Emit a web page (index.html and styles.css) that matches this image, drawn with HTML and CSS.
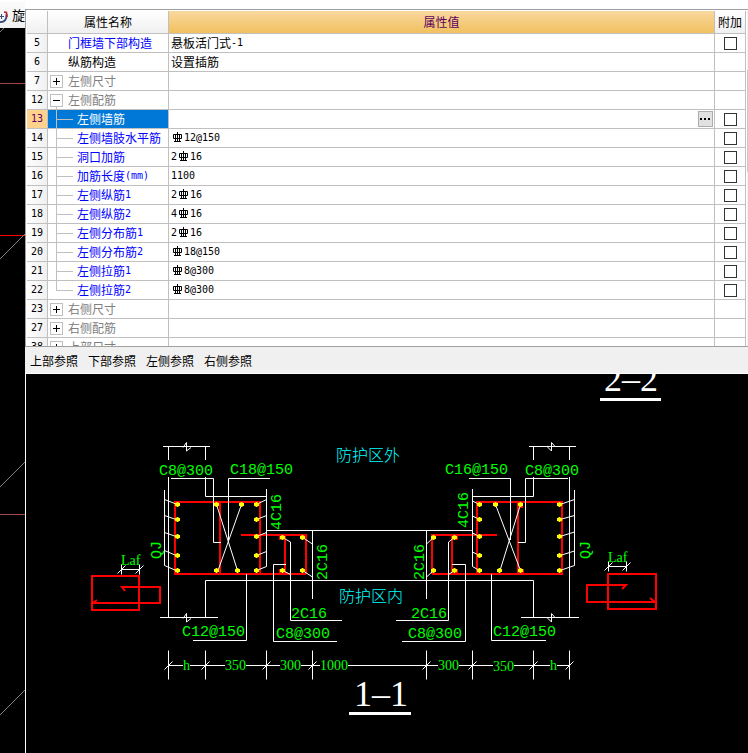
FILE: index.html
```html
<!DOCTYPE html>
<html lang="zh-CN">
<head>
<meta charset="utf-8">
<title>属性编辑</title>
<link rel="stylesheet" href="styles.css">
</head>
<body>
<svg class="defs" aria-hidden="true">
  <symbol id="rebar" viewBox="0 0 13 10">
    <path d="M2.500 2.500H10.500V6.500H2.500ZM6.500 0V9.500M4.500 2V9M8.500 2V9M3 9.500H10" fill="none" stroke="#000"/>
  </symbol>
</svg>
<div class="app">
  <aside class="viewport">
    <div class="toolbar">
      <svg class="rotate" viewBox="0 0 11 24" aria-hidden="true">
        <path d="M0 13.500H4M1.500 11V16" stroke="#3c4a78" fill="none"/>
        <path d="M0 19C4.500 19.500 7 16 6.500 11" stroke="#3c4a78" stroke-width="2" fill="none"/>
        <path d="M4 9L6.500 9.500L7 14" stroke="#b02030" stroke-width="1.500" fill="none"/>
      </svg>
      <span class="toolbar-label">旋转</span>
    </div>
    <svg class="scene" viewBox="0 28 25 725" preserveAspectRatio="xMinYMin slice" aria-hidden="true">
      <path class="axis dim" d="M0 83.500H25M0 514.500H25"/>
      <path class="axis" d="M0 235.500H25"/>
      <path class="ray" d="M0 32L4 28M0 259L25 234M0 487L25 462M0 715L25 690"/>
    </svg>
  </aside>

  <main class="panel">
    <div class="pane">
      <table class="props">
        <colgroup><col class="c-num"><col class="c-name"><col><col class="c-extra"></colgroup>
        <thead>
          <tr><th></th><th>属性名称</th><th class="active">属性值</th><th>附加</th></tr>
        </thead>
        <tbody>
          <tr><th>5</th><td class="name link">门框墙下部构造</td><td><div class="tree">悬板活门式<span class="n">-1</span></div></td><td class="extra"><input type="checkbox" aria-label="附加 门框墙下部构造"></td></tr>
          <tr><th>6</th><td class="name">纵筋构造</td><td>设置插筋</td><td></td></tr>
          <tr><th>7</th><td class="group"><div class="tree"><button class="toggle plus" aria-label="展开"></button>左侧尺寸</div></td><td></td><td></td></tr>
          <tr><th>12</th><td class="group"><div class="tree"><button class="toggle open" aria-label="折叠"></button>左侧配筋</div></td><td></td><td></td></tr>
          <tr class="selected"><th>13</th><td class="leaf"><div class="tree"><i class="guide"></i>左侧墙筋</div></td><td><div class="editor"><button class="more" aria-label="更多"></button></div></td><td class="extra"><input type="checkbox" aria-label="附加 左侧墙筋"></td></tr>
          <tr><th>14</th><td class="leaf"><div class="tree"><i class="guide"></i>左侧墙肢水平筋</div></td><td class="n"><svg class="bar"><use href="#rebar"/></svg>12@150</td><td class="extra"><input type="checkbox" aria-label="附加 左侧墙肢水平筋"></td></tr>
          <tr><th>15</th><td class="leaf"><div class="tree"><i class="guide"></i>洞口加筋</div></td><td class="n">2<svg class="bar"><use href="#rebar"/></svg>16</td><td class="extra"><input type="checkbox" aria-label="附加 洞口加筋"></td></tr>
          <tr><th>16</th><td class="leaf"><div class="tree"><i class="guide"></i>加筋长度<span class="n">(mm)</span></div></td><td class="n">1100</td><td class="extra"><input type="checkbox" aria-label="附加 加筋长度"></td></tr>
          <tr><th>17</th><td class="leaf"><div class="tree"><i class="guide"></i>左侧纵筋<span class="n">1</span></div></td><td class="n">2<svg class="bar"><use href="#rebar"/></svg>16</td><td class="extra"><input type="checkbox" aria-label="附加 左侧纵筋1"></td></tr>
          <tr><th>18</th><td class="leaf"><div class="tree"><i class="guide"></i>左侧纵筋<span class="n">2</span></div></td><td class="n">4<svg class="bar"><use href="#rebar"/></svg>16</td><td class="extra"><input type="checkbox" aria-label="附加 左侧纵筋2"></td></tr>
          <tr><th>19</th><td class="leaf"><div class="tree"><i class="guide"></i>左侧分布筋<span class="n">1</span></div></td><td class="n">2<svg class="bar"><use href="#rebar"/></svg>16</td><td class="extra"><input type="checkbox" aria-label="附加 左侧分布筋1"></td></tr>
          <tr><th>20</th><td class="leaf"><div class="tree"><i class="guide"></i>左侧分布筋<span class="n">2</span></div></td><td class="n"><svg class="bar"><use href="#rebar"/></svg>18@150</td><td class="extra"><input type="checkbox" aria-label="附加 左侧分布筋2"></td></tr>
          <tr><th>21</th><td class="leaf"><div class="tree"><i class="guide"></i>左侧拉筋<span class="n">1</span></div></td><td class="n"><svg class="bar"><use href="#rebar"/></svg>8@300</td><td class="extra"><input type="checkbox" aria-label="附加 左侧拉筋1"></td></tr>
          <tr><th>22</th><td class="leaf"><div class="tree"><i class="guide last"></i>左侧拉筋<span class="n">2</span></div></td><td class="n"><svg class="bar"><use href="#rebar"/></svg>8@300</td><td class="extra"><input type="checkbox" aria-label="附加 左侧拉筋2"></td></tr>
          <tr><th>23</th><td class="group"><div class="tree"><button class="toggle plus" aria-label="展开"></button>右侧尺寸</div></td><td></td><td></td></tr>
          <tr><th>27</th><td class="group"><div class="tree"><button class="toggle plus" aria-label="展开"></button>右侧配筋</div></td><td></td><td></td></tr>
          <tr><th>38</th><td class="group"><div class="tree"><button class="toggle plus" aria-label="展开"></button>上部尺寸</div></td><td></td><td></td></tr>
        </tbody>
      </table>
      <div class="scrollbar"><div class="thumb"></div></div>
    </div>

    <nav class="refs">
      <button>上部参照</button><button>下部参照</button><button>左侧参照</button><button>右侧参照</button>
    </nav>

    <svg class="drawing" viewBox="26 374 722 379" preserveAspectRatio="xMinYMin meet">
      <defs>
        <path id="dot" d="M-1 -2.500H1V-1.500H2.500V1.500H1V2.500H-1V1.500H-2.500V-1.500H-1Z" fill="#ff0"/>
        <path id="break-l" d="M-4 1L-.5 -4V4.500L4 1" fill="none" stroke="#fff"/>
        <path id="break-r" d="M-4 0L.5 4.500V-4L4 0" fill="none" stroke="#fff"/>
        <path id="tick" d="M-4 4L4 -4M0 -15V14" fill="none" stroke="#fff"/>
        <path id="tick-s" d="M-4 4L4 -4M0 -5V5" fill="none" stroke="#fff"/>
      </defs>

      <g class="red">
        <path d="M306 574H175V502H260V574M220 502V574M241 535H306V574M285 535V574"/>
        <path d="M432 574H562V502H477V574M518 502V574M497 535H432V574M452 535V574"/>
        <path d="M92 576H139V610H92ZM125 591L122 587H160V603H93L97 600"/>
        <path d="M608 574H656V609H608ZM622 589L626 585H587V602H655L650 598"/>
        <path d="M214 505H219M214 570H219M280 540V537H284M280 573V570H284M522 502V507H518M518 570H523V574M457 540V535M457 574V570H453"/>
      </g>

      <g class="white">
        <path d="M163 446.500H210M168.500 446V460M205.500 446V460M168.500 477V617M205.500 477V496.500H266.500"/>
        <path d="M171 478.500H213.500V542.500H221M270 478.500H228.500V540"/>
        <path d="M216.500 504.500L237.500 570.500M241.500 504.500L218 570.500"/>
        <path d="M164.500 490V565.500L176 570.500M164.500 499.500L176 504M164.500 515.500L176 519.500M164.500 532.500L176 536.500M164.500 550.500L176 555.500"/>
        <path d="M266.500 489V566.500L256.500 570.500M266.500 499.500L256.500 504.500M266.500 515.500L256.500 519.500M266.500 532.500L256.500 536.500M266.500 551.500L256.500 555.500"/>
        <path d="M266.500 530.500H472.500M312.500 530V599M302.500 537.500L312.500 544M302.500 570.500L312.500 577"/>
        <path d="M282.500 537.500L290.500 542V620.500H342M282.500 570.500L290.500 574.500M286 564.500H273.500V641.500H337M246.500 574V640.500H193"/>
        <path d="M205.500 617V580.500H533.500V617M160 617.500H218M521 617.500H579"/>
        <path d="M529 446.500H576M533.500 446V460M569.500 446V460M569.500 477V617M533.500 477V496.500H472.500"/>
        <path d="M568 478.500H525.500V542.500H518M469 478.500H510.500V540"/>
        <path d="M495.500 504.500L520.500 570.500M520.500 504.500L500 570.500"/>
        <path d="M472.500 489V566.500L479.500 570.500M472.500 501L479.500 504.500M472.500 516L479.500 519.500M472.500 533L479.500 536.500M472.500 552L479.500 555.500"/>
        <path d="M574.500 490V565.500L560 570.500M574.500 499.500L560 504.500M574.500 515.500L560 519.500M574.500 532L560 536.500M574.500 551L560 555.500"/>
        <path d="M426.500 530V599M433.500 537.500L426.500 544M433.500 570.500L426.500 577M454.500 537.500L448.500 542V620.500H396M454.500 570.500L448.500 574.500M452 564.500H465.500V641.500H402M491.500 574V640.500H546"/>
        <path d="M121.500 569.500H139.500M608.500 566.500H626.500"/>
        <path d="M168 665.500H183M190 665.500H225M246 665.500H280M301 665.500H320M348 665.500H438M459 665.500H493M514 665.500H550M557 665.500H569"/>
      </g>
      <use href="#break-l" x="187" y="446.500"/><use href="#break-l" x="187" y="617.500"/>
      <use href="#break-r" x="551" y="446.500"/><use href="#break-r" x="551" y="617.500"/>
      <use href="#tick" x="168.500" y="665.500"/><use href="#tick" x="205.500" y="665.500"/><use href="#tick" x="266.500" y="665.500"/><use href="#tick" x="312.500" y="665.500"/>
      <use href="#tick" x="426.500" y="665.500"/><use href="#tick" x="472.500" y="665.500"/><use href="#tick" x="533.500" y="665.500"/><use href="#tick" x="569.500" y="665.500"/>
      <use href="#tick-s" x="121.500" y="569.500"/><use href="#tick-s" x="139.500" y="569.500"/><use href="#tick-s" x="608.500" y="566.500"/><use href="#tick-s" x="626.500" y="566.500"/>

      <use href="#dot" x="177.500" y="504.500"/><use href="#dot" x="177.500" y="519.500"/><use href="#dot" x="177.500" y="536.500"/><use href="#dot" x="177.500" y="555.500"/><use href="#dot" x="177.500" y="570.500"/>
      <use href="#dot" x="256.500" y="504.500"/><use href="#dot" x="256.500" y="519.500"/><use href="#dot" x="256.500" y="536.500"/><use href="#dot" x="256.500" y="555.500"/><use href="#dot" x="256.500" y="570.500"/>
      <use href="#dot" x="216.500" y="504.500"/><use href="#dot" x="241.500" y="504.500"/><use href="#dot" x="216.500" y="570.500"/><use href="#dot" x="237.500" y="570.500"/>
      <use href="#dot" x="282.500" y="537.500"/><use href="#dot" x="302.500" y="537.500"/><use href="#dot" x="282.500" y="570.500"/><use href="#dot" x="302.500" y="570.500"/>
      <use href="#dot" x="433.500" y="537.500"/><use href="#dot" x="454.500" y="537.500"/><use href="#dot" x="433.500" y="570.500"/><use href="#dot" x="454.500" y="570.500"/>
      <use href="#dot" x="479.500" y="504.500"/><use href="#dot" x="479.500" y="519.500"/><use href="#dot" x="479.500" y="536.500"/><use href="#dot" x="479.500" y="555.500"/><use href="#dot" x="479.500" y="570.500"/>
      <use href="#dot" x="495.500" y="504.500"/><use href="#dot" x="520.500" y="504.500"/><use href="#dot" x="499.500" y="570.500"/><use href="#dot" x="520.500" y="570.500"/>
      <use href="#dot" x="559.500" y="504.500"/><use href="#dot" x="559.500" y="519.500"/><use href="#dot" x="559.500" y="536.500"/><use href="#dot" x="559.500" y="555.500"/><use href="#dot" x="559.500" y="570.500"/>

      <g class="label">
        <text x="159" y="475">C8@300</text><text x="230" y="474">C18@150</text>
        <text x="445" y="474">C16@150</text><text x="525" y="475">C8@300</text>
        <text x="291" y="618">2C16</text><text x="276" y="638">C8@300</text><text x="182" y="636">C12@150</text>
        <text x="411" y="618">2C16</text><text x="408" y="638">C8@300</text><text x="493" y="636">C12@150</text>
        <text transform="translate(281 530) rotate(-90)">4C16</text>
        <text transform="translate(327 580) rotate(-90)">2C16</text>
        <text transform="translate(161 559) rotate(-90)">QJ</text>
        <text transform="translate(468 528) rotate(-90)">4C16</text>
        <text transform="translate(424 580) rotate(-90)">2C16</text>
        <text transform="translate(590 559) rotate(-90)">QJ</text>
      </g>
      <g class="dimension">
        <text x="121" y="565">Laf</text><text x="608" y="562">Laf</text>
        <text x="183" y="670">h</text><text x="225" y="670">350</text><text x="280" y="670">300</text><text x="320" y="670">1000</text>
        <text x="438" y="670">300</text><text x="493" y="671">350</text><text x="550" y="670">h</text>
      </g>
      <g class="zone"><text x="336" y="461">防护区外</text><text x="339" y="602">防护区内</text></g>
      <g class="section">
        <text x="604" y="391">2–2</text><rect x="600" y="398" width="61" height="3"/>
        <text x="354" y="706">1–1</text><rect x="349" y="712" width="62" height="3"/>
      </g>
    </svg>
  </main>
</div>
</body>
</html>
```
FILE: styles.css
```css
* { box-sizing: border-box; }

body {
  margin: 0;
  background: #000;
  color: #000;
  font: 12px/18px "Noto Sans CJK SC", sans-serif;
}

button {
  margin: 0;
  padding: 0;
  border: 0;
  background: none;
  color: inherit;
  font: inherit;
}

.defs { display: block; width: 0; height: 0; }

.app { display: flex; height: 100vh; overflow: hidden; }

/* model viewport behind the panel */
.viewport {
  flex: 0 0 25px;
  display: flex;
  flex-direction: column;
  overflow: hidden;
}

.toolbar {
  flex: none;
  display: flex;
  align-items: center;
  gap: 1px;
  height: 28px;
  padding-top: 2px;
  overflow: hidden;
  background: linear-gradient(#fff, #fafafa 10%, #f0f0f0);
  white-space: nowrap;
}

.rotate { flex: none; width: 11px; height: 24px; }
.toolbar-label { flex: none; font-size: 13px; }
.scene { flex: 1; width: 25px; min-height: 0; }
.axis { stroke: #f00; }
.axis.dim { stroke: #a04848; }
.ray { stroke: #808080; }

/* property panel */
.panel {
  flex: 1;
  min-width: 0;
  display: flex;
  flex-direction: column;
  padding-top: 9px;
  background: #fff;
}

.pane {
  flex: none;
  display: flex;
  gap: 1px;
  height: 338px;
  padding: 1px 0 0 1px;
  overflow: hidden;
  border: solid #a0a0a0;
  border-width: 1px 0 1px 1px;
}

.props {
  flex: 1;
  min-width: 0;
  align-self: flex-start;
  table-layout: fixed;
  border-spacing: 0;
}

.c-num { width: 21px; }
.c-name { width: 121px; }
.c-extra { width: 31px; }

.props th, .props td {
  height: 19px;
  padding: 0;
  overflow: hidden;
  border: solid #c0c0c0;
  border-width: 0 1px 1px 0;
  line-height: 18px;
  font-weight: 400;
  white-space: nowrap;
}

.props thead th {
  height: 23px;
  background: linear-gradient(#fff, #f0f0f0);
}

.props thead .active {
  background: linear-gradient(#f9d89f, #f1c15f);
  color: #600060;
}

.props tbody th {
  background: linear-gradient(90deg, #fff, #f0f0f0);
  font: 10px/18px "DejaVu Sans Mono", monospace;
}

.props td { padding-left: 2px; }
.props .n { font-family: "DejaVu Sans Mono", monospace; font-size: 10px; }
.props .name { padding-left: 20px; }
.props .link { color: #00f; }
.props .group { color: #808080; }
.props .leaf { color: #00f; padding-left: 8px; }
.props .extra { padding: 0; text-align: center; }

.tree { display: flex; align-items: center; height: 18px; }

.toggle {
  position: relative;
  flex: none;
  width: 13px;
  height: 13px;
  margin-right: 5px;
  border: 1px solid #c0c0c0;
  background: linear-gradient(#000, #000) center / 7px 1px no-repeat;
}

.toggle.plus {
  background:
    linear-gradient(#000, #000) center / 7px 1px no-repeat,
    linear-gradient(#000, #000) center / 1px 7px no-repeat;
}

.toggle.open::after {
  content: "";
  position: absolute;
  top: 12px;
  left: 5px;
  height: 4px;
  border-left: 1px solid #c0c0c0;
}

.guide {
  flex: none;
  width: 17px;
  height: 18px;
  margin-right: 4px;
  background:
    linear-gradient(#c0c0c0, #c0c0c0) 0 0 / 1px 100% no-repeat,
    linear-gradient(#c0c0c0, #c0c0c0) 0 9px / 100% 1px no-repeat;
}

.guide.last {
  background:
    linear-gradient(#c0c0c0, #c0c0c0) 0 0 / 1px 10px no-repeat,
    linear-gradient(#c0c0c0, #c0c0c0) 0 9px / 100% 1px no-repeat;
}

.props .selected th { background: #fdd28c; color: #600060; }
.props .selected .leaf { background: #0078d7; color: #fff; }

.editor { display: flex; justify-content: flex-end; padding-right: 1px; }

.more {
  width: 15px;
  height: 16px;
  border: 1px solid #adadad;
  background:
    linear-gradient(#000, #000) 1px 6px / 2px 2px no-repeat,
    linear-gradient(#000, #000) 5px 6px / 2px 2px no-repeat,
    linear-gradient(#000, #000) 9px 6px / 2px 2px no-repeat,
    #e1e1e1;
}

.bar { width: 13px; height: 10px; vertical-align: -1px; }

input[type="checkbox"] {
  display: block;
  width: 13px;
  height: 13px;
  margin: 1px auto 0;
  appearance: none;
  border: 1px solid #333;
  background: #fff;
}

.scrollbar { flex: 0 0 1px; background: #f0f0f0; }
.thumb { height: 102px; margin-top: 59px; background: #c8c8c8; }

.refs {
  flex: none;
  display: flex;
  align-items: center;
  gap: 10px;
  height: 27px;
  padding: 2px 0 0 5px;
  border-bottom: 1px solid #fff;
  background: #f0f0f0;
}

/* section drawing */
.drawing {
  flex: 1;
  min-height: 0;
  margin-left: 1px;
  background: #000;
}

.red { fill: none; stroke: #f00; stroke-width: 2; }
.white { fill: none; stroke: #fff; }
.label { fill: #0f0; font: 15px "Liberation Mono", monospace; }
.dimension { fill: #0f0; font: 14px "Liberation Serif", serif; }
.zone { fill: #0ff; font: 300 16px "Noto Sans CJK SC", sans-serif; }
.section { fill: #fff; font: 36px "Liberation Serif", serif; }
```
